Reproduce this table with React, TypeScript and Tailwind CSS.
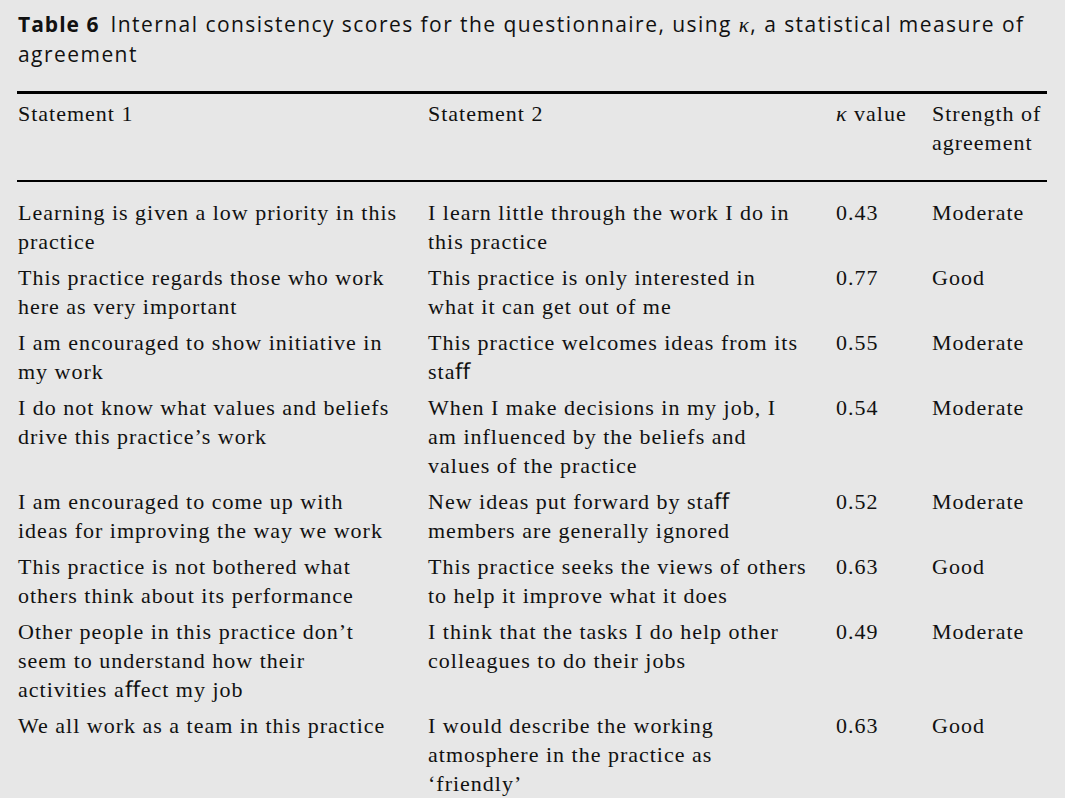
import React from "react";

type Row = { a: string[]; b: string[]; k: string; s: string };

const rows: Row[] = [
  { a: ["Learning is given a low priority in this", "practice"], b: ["I learn little through the work I do in", "this practice"], k: "0.43", s: "Moderate" },
  { a: ["This practice regards those who work", "here as very important"], b: ["This practice is only interested in", "what it can get out of me"], k: "0.77", s: "Good" },
  { a: ["I am encouraged to show initiative in", "my work"], b: ["This practice welcomes ideas from its", "staﬀ"], k: "0.55", s: "Moderate" },
  { a: ["I do not know what values and beliefs", "drive this practice’s work"], b: ["When I make decisions in my job, I", "am influenced by the beliefs and", "values of the practice"], k: "0.54", s: "Moderate" },
  { a: ["I am encouraged to come up with", "ideas for improving the way we work"], b: ["New ideas put forward by staﬀ", "members are generally ignored"], k: "0.52", s: "Moderate" },
  { a: ["This practice is not bothered what", "others think about its performance"], b: ["This practice seeks the views of others", "to help it improve what it does"], k: "0.63", s: "Good" },
  { a: ["Other people in this practice don’t", "seem to understand how their", "activities aﬀect my job"], b: ["I think that the tasks I do help other", "colleagues to do their jobs"], k: "0.49", s: "Moderate" },
  { a: ["We all work as a team in this practice"], b: ["I would describe the working", "atmosphere in the practice as", "‘friendly’"], k: "0.63", s: "Good" },
];

function Lines({ lines }: { lines: string[] }) {
  return (
    <div className="flex flex-col">
      {lines.map((l, i) => (
        <span key={i} className="whitespace-nowrap">{l}</span>
      ))}
    </div>
  );
}

export default function App() {
  return (
    <div className="w-[1065px] h-[798px] overflow-hidden bg-[#e7e7e7] text-[#111]">
      <div className="pl-[18px] pr-[18px] pt-[10px]">
        <div className="font-['Open_Sans',sans-serif] text-[21px] leading-[29px] tracking-[1.45px]">
          <div className="whitespace-nowrap">
            <span className="font-bold tracking-[1px]">Table 6</span>
            <span className="ml-[11px]">Internal consistency scores for the questionnaire, using <i className="font-['Liberation_Serif',serif]">κ</i>, a statistical measure of</span>
          </div>
          <div>agreement</div>
        </div>
      </div>
      <div className="ml-[17px] w-[1030px] mt-[22px] font-['Liberation_Serif',serif] text-[22px] leading-[29px] tracking-[1px]">
        <div className="h-[3px] bg-black" />
        <div className="grid grid-cols-[410px_408px_96px_1fr] pt-[5px] pb-[23px] pl-[1px]">
          <div>Statement 1</div>
          <div>Statement 2</div>
          <div className="whitespace-nowrap"><i>κ</i> value</div>
          <div>
            <div>Strength of</div>
            <div>agreement</div>
          </div>
        </div>
        <div className="h-[2px] bg-black" />
        <div className="pt-[16px] pl-[1px]">
          {rows.map((r, i) => (
            <div key={i} className="grid grid-cols-[410px_408px_96px_1fr] pb-[7px]">
              <Lines lines={r.a} />
              <Lines lines={r.b} />
              <div>{r.k}</div>
              <div>{r.s}</div>
            </div>
          ))}
        </div>
      </div>
    </div>
  );
}
